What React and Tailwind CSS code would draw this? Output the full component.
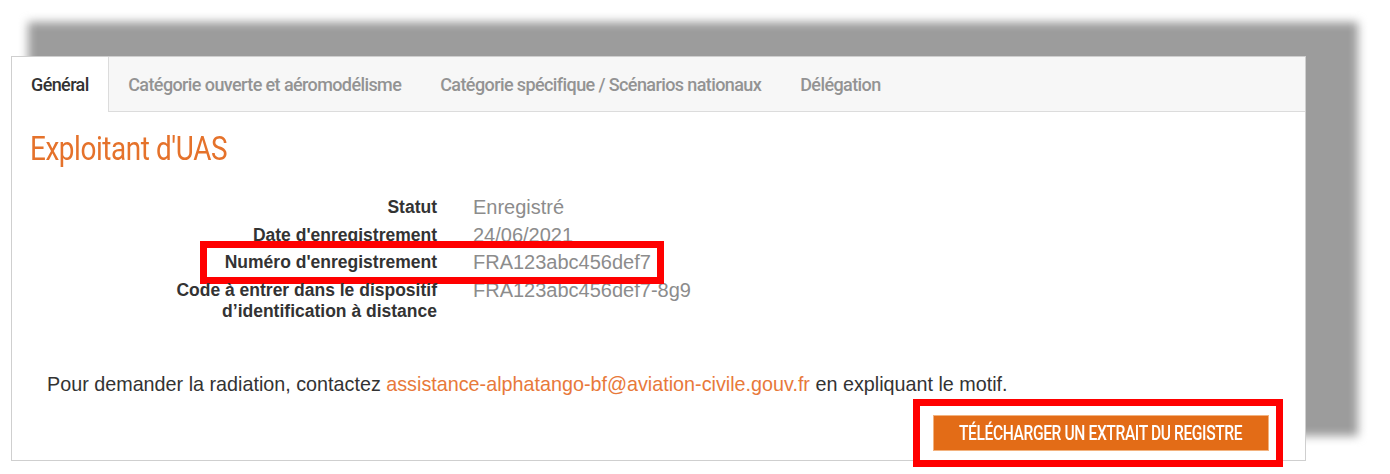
import React from 'react';

const condensed = { fontFamily: 'Roboto, "Liberation Sans", sans-serif' };
const arial = { fontFamily: '"Liberation Sans", Arial, sans-serif' };

const tabs = [
  'Général',
  'Catégorie ouverte et aéromodélisme',
  'Catégorie spécifique / Scénarios nationaux',
  'Délégation',
];

const Row = ({ label, value, boxed, labelClass = 'leading-[27.5px]' }) => (
  <>
    <div className={`relative text-right font-bold text-[17.5px] text-[#333] ${labelClass}`}>
      {boxed && (
        <div className="absolute left-[188px] top-[-8px] w-[464px] h-[43px] border-[7px] border-[#ff0000] pointer-events-none" />
      )}
      {label}
    </div>
    <div className="text-[20px] leading-[27.5px] text-[#8c8c8c]">{value}</div>
  </>
);

export default function App() {
  return (
    <div className="relative w-[1390px] h-[474px] bg-white overflow-hidden" style={arial}>
      {/* drop shadow behind the panel */}
      <div className="absolute left-[28px] top-[22px] w-[1330px] h-[414px] bg-[#9c9c9c] blur-[5px]" />

      <div className="relative ml-[11px] pt-[56px]">
        <div className="w-[1295px] h-[405px] bg-white border border-[#cfcfcf]">
          {/* Tabs */}
          <div className="flex h-[55px] bg-[#f7f7f7] border-b border-[#dcdcdc]" style={condensed}>
            {tabs.map((t, i) => (
              <div
                key={t}
                className={
                  i === 0
                    ? 'flex items-center px-[19px] bg-white border-r border-[#dcdcdc] -mb-px text-[18px] font-medium tracking-[-0.6px] text-[#333]'
                    : 'flex items-center px-[19.5px] text-[18px] font-medium tracking-[-0.6px] text-[#939393]'
                }
              >
                {t}
              </div>
            ))}
          </div>

          <h1 className="mt-[16px] ml-[18px] text-[34px] leading-[40px] text-[#e5722b]" style={condensed}>
            <span className="inline-block origin-left scale-x-[0.82] tracking-[-0.5px]">Exploitant d'UAS</span>
          </h1>

          <div className="grid grid-cols-[425px_auto] gap-x-[36px] mt-[26px] w-max">
            <Row label="Statut" value="Enregistré" />
            <Row label="Date d'enregistrement" value="24/06/2021" />
            <Row label="Numéro d'enregistrement" value="FRA123abc456def7" boxed />
            <Row
              label={<>Code à entrer dans le dispositif<br />d’identification à distance</>}
              value="FRA123abc456def7-8g9"
              labelClass="leading-[21px] pt-[3px]"
            />
          </div>

          <p className="mt-[50px] ml-[35px] text-[19.75px] leading-[24px] text-[#333]">
            Pour demander la radiation, contactez{' '}
            <a className="text-[#e8793a]">assistance-alphatango-bf@aviation-civile.gouv.fr</a> en expliquant le motif.
          </p>

          <div className="flex justify-end mt-[3px] mr-[22px]">
            <div className="relative bg-white border-[7px] border-[#ff0000] pt-[9px] pb-[9px] pl-[13px] pr-[7px]">
              <button
                className="flex items-center justify-center h-[36px] w-[336px] bg-[#e36c17] border border-[#f3b27e] text-white text-[20px] font-medium uppercase whitespace-nowrap"
                style={condensed}
              >
                <span className="inline-block scale-x-[0.78] tracking-[-0.5px]">Télécharger un extrait du registre</span>
              </button>
            </div>
          </div>
        </div>
      </div>
    </div>
  );
}
